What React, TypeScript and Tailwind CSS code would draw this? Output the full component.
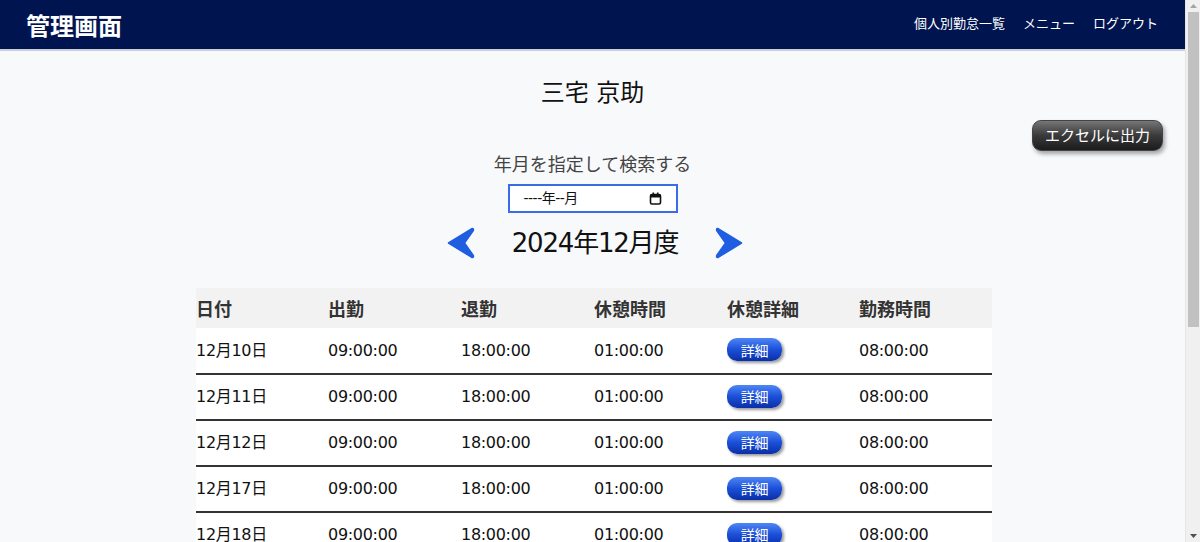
import React from "react";

const rows = ["12月10日", "12月11日", "12月12日", "12月17日", "12月18日", "12月19日", "12月20日"];

function Arrow({ dir }: { dir: "left" | "right" }) {
  return (
    <svg width="28" height="32" viewBox="0 0 28 32" className={dir === "right" ? "scale-x-[-1]" : ""}>
      <path
        d="M1.5 16 L24.5 1.8 Q27 0.8 26.3 3.5 L17.5 16 L26.3 28.5 Q27 31.2 24.5 30.2 Z"
        fill="#1f5ee0"
        stroke="#1f5ee0"
        strokeWidth="1.5"
        strokeLinejoin="round"
      />
    </svg>
  );
}

export default function App() {
  const font = { fontFamily: '"DejaVu Sans", "Noto Sans CJK JP", sans-serif' };
  return (
    <div className="h-[542px] overflow-hidden flex bg-[#f8f9fb] text-[#111]" style={font}>
      <div className="flex-1 min-w-0">
        <header className="h-[51px] bg-[#00154f] border-b-2 border-[#c9cfdf] flex items-center justify-between pl-[26px] pr-[27px]">
          <h1 className="text-white text-[24px] font-bold leading-none" style={{ fontFamily: '"Noto Sans CJK JP", sans-serif' }}>
            管理画面
          </h1>
          <nav className="flex gap-[18px] text-white text-[13px] mt-[-4px]" style={{ fontFamily: '"Noto Sans CJK JP", sans-serif' }}>
            <span>個人別勤怠一覧</span>
            <span>メニュー</span>
            <span>ログアウト</span>
          </nav>
        </header>

        <main className="relative flex flex-col items-center">
          <h2 className="mt-[25px] text-[24px] leading-[34px]">三宅 京助</h2>
          <button className="absolute right-[22px] top-[69px] h-[31px] w-[131px] rounded-[9px] text-[15px] text-white bg-gradient-to-b from-[#777] via-[#3a3a3a] to-[#1c1c1c] shadow-[2px_3px_4px_rgba(0,0,0,0.35)] border border-[#444]" style={{ fontFamily: '"Noto Sans CJK JP", sans-serif' }}>
            エクセルに出力
          </button>
          <p className="mt-[42px] text-[18px] leading-[26px] text-[#444]">年月を指定して検索する</p>
          <div className="mt-[6px] w-[170px] h-[29px] border-2 border-[#3b6ce8] bg-white flex items-center justify-between pl-[14px] pr-[14px] text-[14px]">
            <span className="tracking-[-0.5px]">----年--月</span>
            <svg width="13" height="13" viewBox="0 0 13 13">
              <rect x="1.5" y="2.5" width="10" height="9.5" rx="1.5" fill="none" stroke="#111" strokeWidth="1.6" />
              <rect x="1.5" y="2.5" width="10" height="3" fill="#111" />
              <rect x="3.5" y="0.5" width="1.6" height="3" fill="#111" />
              <rect x="7.9" y="0.5" width="1.6" height="3" fill="#111" />
            </svg>
          </div>
          <div className="mt-[12px] ml-[5px] flex items-center gap-[37px]">
            <Arrow dir="left" />
            <span className="text-[26px] leading-[36px] tracking-[-1.2px]">2024年12月度</span>
            <Arrow dir="right" />
          </div>

          <table className="mt-[27px] w-[796px] ml-[3px] border-collapse text-left">
            <thead>
              <tr className="bg-[#f2f2f2] h-[40px] text-[18px] font-bold text-[#333]" style={{ fontFamily: '"Noto Sans CJK JP", sans-serif' }}>
                <th className="w-[132px] font-bold">日付</th>
                <th className="w-[133px] font-bold">出勤</th>
                <th className="w-[133px] font-bold">退勤</th>
                <th className="w-[133px] font-bold">休憩時間</th>
                <th className="w-[132px] font-bold">休憩詳細</th>
                <th className="font-bold">勤務時間</th>
              </tr>
            </thead>
            <tbody className="text-[16px] tracking-[-0.3px]">
              {rows.map((d) => (
                <tr key={d} className="h-[46px] bg-white border-b-2 border-[#333]">
                  <td>{d}</td>
                  <td>09:00:00</td>
                  <td>18:00:00</td>
                  <td>01:00:00</td>
                  <td>
                    <button className="h-[23px] w-[55px] rounded-[10px] text-[14px] text-white bg-gradient-to-b from-[#4f86f5] via-[#1c4fd8] to-[#0a2fa8] shadow-[2px_2px_3px_rgba(0,0,0,0.4)] leading-none" style={{ fontFamily: '"Noto Sans CJK JP", sans-serif' }}>
                      詳細
                    </button>
                  </td>
                  <td>08:00:00</td>
                </tr>
              ))}
            </tbody>
          </table>
        </main>
      </div>

      <div className="w-[15px] shrink-0 bg-[#f0f0f0] border-l border-[#e6e6e6] flex flex-col items-center">
        <svg width="9" height="12" viewBox="0 0 9 12" className="shrink-0">
          <path d="M1 8 L4.5 4 L8 8 Z" fill="#a3a3a3" />
        </svg>
        <div className="w-[11px] h-[315px] bg-[#c1c1c1]" />
        <div className="flex-1" />
        <svg width="9" height="12" viewBox="0 0 9 12" className="shrink-0">
          <path d="M1 4 L4.5 8 L8 4 Z" fill="#505050" />
        </svg>
      </div>
    </div>
  );
}
